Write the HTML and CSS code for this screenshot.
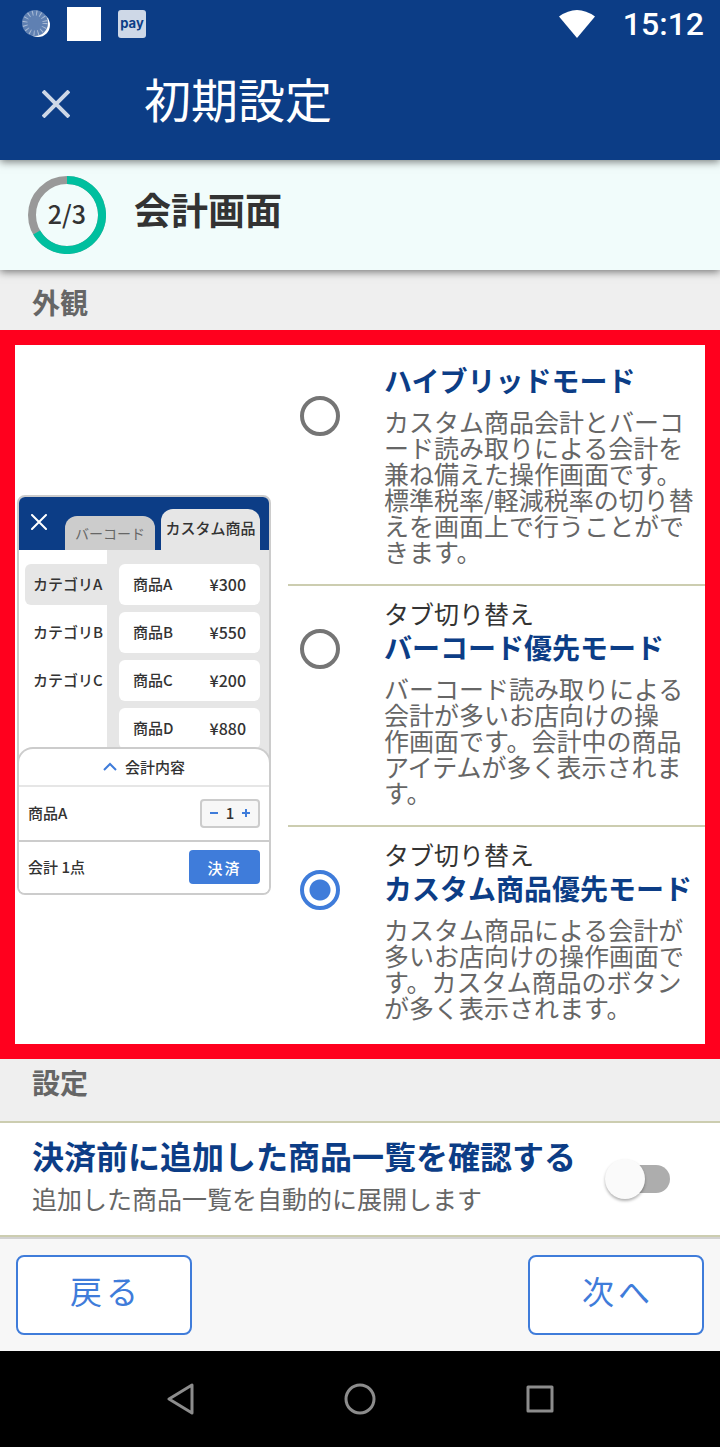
FILE: index.html
```html
<!DOCTYPE html>
<html lang="ja">
<head>
    <meta charset="UTF-8">
    <meta name="viewport" content="width=device-width, initial-scale=1.0">
    <title>初期設定</title>
    <link rel="stylesheet" href="styles.css">
</head>
<body>
    <div class="status-bar">
        <svg class="status-sync" viewBox="0 0 30 30" aria-hidden="true">
            <circle cx="16" cy="16" r="12" fill="#fff"/>
            <circle cx="13" cy="14" r="13" fill="#5f80b2"/>
            <circle cx="13" cy="14" r="10" fill="none" stroke="#a9bbd6" stroke-width="5" stroke-dasharray="1 3"/>
        </svg>
        <span class="status-square"></span>
        <span class="status-pay">pay</span>
        <svg class="status-wifi" viewBox="0 0 36 28" aria-hidden="true">
            <path d="M0 6.500Q18-6.500 36 6.500L18 28Z" fill="#fff"/>
        </svg>
        <span class="status-time">15:12</span>
    </div>

    <header class="app-bar">
        <button type="button" class="close-btn" aria-label="閉じる">
            <svg viewBox="0 0 28 28"><path d="M1 1L27 27M27 1L1 27" stroke="#ced8e7" stroke-width="4"/></svg>
        </button>
        <h1>初期設定</h1>
    </header>

    <div class="step">
        <div class="step-ring">
            <svg viewBox="0 0 78 78" aria-hidden="true">
                <circle cx="39" cy="39" r="35" fill="none" stroke="#999" stroke-width="8"/>
                <path d="M39 4A35 35 0 1 1 8.690 56.500" fill="none" stroke="#00bf9f" stroke-width="8"/>
            </svg>
            <span>2/3</span>
        </div>
        <h2>会計画面</h2>
    </div>

    <main>
        <h3 class="section-title">外観</h3>

        <div class="appearance">
            <!-- 選択中モードのプレビュー -->
            <div class="preview">
                <div class="preview-head">
                    <button type="button" class="preview-close" aria-label="閉じる">
                        <svg viewBox="0 0 16 16"><path d="M1 1L15 15M15 1L1 15" stroke="#fff" stroke-width="2" stroke-linecap="round"/></svg>
                    </button>
                    <button type="button" class="preview-tab">バーコード</button>
                    <button type="button" class="preview-tab active">カスタム商品</button>
                </div>
                <div class="preview-body">
                    <ul class="categories">
                        <li class="active">カテゴリA</li>
                        <li>カテゴリB</li>
                        <li>カテゴリC</li>
                    </ul>
                    <ul class="items">
                        <li><span>商品A</span><span class="price">¥300</span></li>
                        <li><span>商品B</span><span class="price">¥550</span></li>
                        <li><span>商品C</span><span class="price">¥200</span></li>
                        <li><span>商品D</span><span class="price">¥880</span></li>
                    </ul>
                </div>
                <div class="sheet">
                    <div class="sheet-head">
                        <svg viewBox="0 0 14 9" aria-hidden="true"><path d="M1 8L7 2L13 8" fill="none" stroke="#3f7cda" stroke-width="2"/></svg>
                        会計内容
                    </div>
                    <div class="sheet-row">
                        <span>商品A</span>
                        <div class="stepper">
                            <button type="button" aria-label="減らす"><svg viewBox="0 0 10 10"><path d="M1 5H9" stroke="#3f7cda" stroke-width="2"/></svg></button>
                            <span>1</span>
                            <button type="button" aria-label="増やす"><svg viewBox="0 0 10 10"><path d="M1 5H9M5 1V9" stroke="#3f7cda" stroke-width="2"/></svg></button>
                        </div>
                    </div>
                    <div class="sheet-row total">
                        <span>会計 1点</span>
                        <button type="button" class="pay-btn">決済</button>
                    </div>
                </div>
            </div>

            <div class="modes">
                <label class="mode" for="hybrid">
                    <input type="radio" name="mode" id="hybrid">
                    <span class="mode-text">
                        <span class="mode-name">ハイブリッドモード</span>
                        <span class="mode-desc">カスタム商品会計とバーコード読み取りによる会計を兼ね備えた操作画面です。標準税率/軽減税率の切り替えを画面上で行うことができます。</span>
                    </span>
                </label>
                <label class="mode" for="barcode">
                    <input type="radio" name="mode" id="barcode">
                    <span class="mode-text">
                        <span class="mode-kind">タブ切り替え</span>
                        <span class="mode-name">バーコード優先モード</span>
                        <span class="mode-desc">バーコード読み取りによる会計が多いお店向けの操<br>作画面です。会計中の商品アイテムが多く表示されます。</span>
                    </span>
                </label>
                <label class="mode" for="custom">
                    <input type="radio" name="mode" id="custom" checked>
                    <span class="mode-text">
                        <span class="mode-kind">タブ切り替え</span>
                        <span class="mode-name">カスタム商品優先モード</span>
                        <span class="mode-desc">カスタム商品による会計が多いお店向けの操作画面です。カスタム商品のボタンが多く表示されます。</span>
                    </span>
                </label>
            </div>
        </div>

        <h3 class="section-title">設定</h3>

        <label class="setting" for="confirm">
            <span class="setting-text">
                <span class="setting-name">決済前に追加した商品一覧を確認する</span>
                <span class="setting-desc">追加した商品一覧を自動的に展開します</span>
            </span>
            <input type="checkbox" class="switch" id="confirm">
        </label>
    </main>

    <footer class="actions">
        <button type="button" class="action-btn">戻る</button>
        <button type="button" class="action-btn">次へ</button>
    </footer>

    <nav class="nav-bar">
        <button type="button" aria-label="戻る">
            <svg viewBox="0 0 32 32"><path d="M28 2V30L5 16Z"/></svg>
        </button>
        <button type="button" aria-label="ホーム">
            <svg viewBox="0 0 32 32"><circle cx="16" cy="16" r="14"/></svg>
        </button>
        <button type="button" aria-label="履歴">
            <svg viewBox="0 0 32 32"><rect x="4" y="4" width="24" height="24"/></svg>
        </button>
    </nav>
</body>
</html>
```

FILE: styles.css
```css
* {
    box-sizing: border-box;
}

body {
    margin: 0;
    font-family: "Noto Sans CJK JP", sans-serif;
    background-color: #efefef;
    color: #333;
}

h1, h2, h3, ul {
    margin: 0;
    padding: 0;
}

ul {
    list-style: none;
}

button {
    font-family: inherit;
    padding: 0;
    border: none;
    background: none;
    cursor: pointer;
}

svg {
    display: block;
}

/* status bar */
.status-bar {
    position: relative;
    display: flex;
    align-items: center;
    height: 48px;
    padding: 0 16px 0 22px;
    background-color: #0c3d86;
    color: #fff;
    z-index: 3;
}

.status-sync {
    width: 30px;
    height: 30px;
}

.status-square {
    width: 34px;
    height: 34px;
    margin: 0 17px 0 15px;
    background-color: #fff;
}

.status-pay {
    width: 28px;
    height: 28px;
    border-radius: 3px;
    background-color: #ced8e7;
    color: #0c3d86;
    font: bold 13px/26px Inter, sans-serif;
    text-align: center;
}

.status-wifi {
    width: 36px;
    height: 28px;
    margin: 0 28px 0 auto;
}

.status-time {
    font: 500 32px/50px Roboto, sans-serif;
}

/* app bar */
.app-bar {
    position: relative;
    display: flex;
    align-items: center;
    height: 112px;
    padding-left: 42px;
    background-color: #0c3d86;
    color: #fff;
    box-shadow: 0 2px 8px rgba(0, 0, 0, 0.5);
    z-index: 2;
}

.close-btn {
    width: 28px;
    height: 28px;
}

.app-bar h1 {
    margin-left: 74px;
    padding-bottom: 12px;
    font-size: 47px;
    line-height: 60px;
    font-weight: 400;
}

/* step */
.step {
    position: relative;
    display: flex;
    align-items: center;
    height: 110px;
    padding-left: 28px;
    background-color: #f1fcfb;
    box-shadow: 0 2px 8px rgba(0, 0, 0, 0.5);
    z-index: 1;
}

.step-ring {
    display: grid;
    place-items: center;
    width: 78px;
    height: 78px;
    font-size: 25px;
    line-height: 30px;
    font-weight: 500;
}

.step-ring svg,
.step-ring span {
    grid-area: 1 / 1;
}

.step-ring span {
    padding-bottom: 4px;
}

.step h2 {
    margin-left: 28px;
    padding-bottom: 12px;
    font-size: 37px;
    line-height: 48px;
    font-weight: 700;
}

.section-title {
    height: 60px;
    padding: 14px 32px 0;
    font-size: 28px;
    line-height: 36px;
    font-weight: 700;
    color: #666;
}

/* appearance */
.appearance {
    display: grid;
    grid-template-columns: 273px 1fr;
    align-items: center;
    border: 15px solid #ff001e;
    background-color: #fff;
}

.appearance + .section-title {
    height: 62px;
    padding-top: 5px;
}

/* preview */
.preview {
    width: 254px;
    margin-left: 2px;
    border: 2px solid #ccc;
    border-radius: 8px;
    overflow: hidden;
    font-size: 15px;
    line-height: 20px;
    font-weight: 500;
}

.preview button {
    color: inherit;
    font-size: 15px;
    font-weight: 500;
}

.preview-head {
    display: flex;
    align-items: flex-end;
    height: 53px;
    padding: 0 9px 0 12px;
    background-color: #0c3d86;
}

.preview-close {
    width: 16px;
    height: 16px;
    margin: 0 auto 20px 0;
}

.preview .preview-tab {
    width: 90px;
    height: 34px;
    margin-right: 6px;
    border-radius: 12px 12px 0 0;
    background-color: #ccc;
    color: #666;
    font-size: 14px;
    font-weight: 400;
}

.preview .preview-tab.active {
    width: 99px;
    height: 41px;
    margin-right: 0;
    padding-bottom: 4px;
    background-color: #e6e6e6;
    color: #333;
    font-size: 15px;
    font-weight: 500;
}

.preview-body {
    display: flex;
    height: 212px;
    background-color: #e6e6e6;
}

.categories {
    width: 88px;
    padding: 14px 0 0 6px;
    background-color: #fff;
}

.categories li {
    height: 41px;
    margin-bottom: 7px;
    padding: 10px 0 0 8px;
    border-radius: 6px 0 0 6px;
    white-space: nowrap;
}

.categories .active {
    background-color: #e6e6e6;
}

.items {
    flex: 1;
    padding: 14px 9px 0 12px;
}

.items li {
    display: flex;
    justify-content: space-between;
    height: 41px;
    margin-bottom: 7px;
    padding: 10px 14px 0;
    border-radius: 6px;
    background-color: #fff;
}

.items .price {
    font-size: 16px;
}

.sheet {
    position: relative;
    margin: -15px -2px 0;
    border: 2px solid #ccc;
    border-bottom: none;
    border-radius: 16px 16px 0 0;
    background-color: #fff;
}

.sheet-head {
    display: flex;
    justify-content: center;
    align-items: center;
    gap: 8px;
    height: 38px;
    border-bottom: 2px solid #e6e6e6;
}

.sheet-head svg {
    width: 14px;
    height: 9px;
}

.sheet-row {
    display: flex;
    justify-content: space-between;
    align-items: center;
    height: 53px;
    padding: 0 9px;
}

.sheet-row.total {
    border-top: 2px solid #ccc;
}

.stepper {
    display: flex;
    justify-content: space-between;
    align-items: center;
    width: 60px;
    height: 29px;
    padding: 0 7px;
    border: 2px solid #ccc;
    border-radius: 4px;
    background-color: #f7f7f7;
}

.stepper svg {
    width: 10px;
    height: 10px;
}

.preview .pay-btn {
    width: 71px;
    height: 34px;
    border-radius: 4px;
    background-color: #3f7cda;
    color: #fff;
    letter-spacing: 2px;
}

/* modes */
.modes {
    padding: 8px 0 4px;
}

.mode {
    display: flex;
    align-items: flex-start;
    padding: 10px 10px 20px 12px;
}

.mode + .mode {
    border-top: 2px solid #cccdb0;
}

.mode input {
    flex: none;
    appearance: none;
    width: 40px;
    height: 40px;
    margin: 33px 44px 0 0;
    border: 4px solid #757575;
    border-radius: 50%;
}

.mode input:checked {
    border-color: #3f7cda;
    background: radial-gradient(circle, #3f7cda 10px, transparent 11px);
}

.mode-text span {
    display: block;
}

.mode-kind {
    font-size: 25px;
    line-height: 34px;
}

.mode-name {
    margin-bottom: 11px;
    font-size: 28px;
    line-height: 34px;
    font-weight: 700;
    color: #0c3d86;
}

.mode-desc {
    font-size: 25px;
    line-height: 26px;
    color: #666;
    line-break: anywhere;
}

/* setting */
.setting {
    display: flex;
    justify-content: space-between;
    align-items: center;
    height: 116px;
    padding: 0 50px 0 32px;
    border-top: 2px solid #cccdb0;
    border-bottom: 2px solid #cccdb0;
    background-color: #fff;
}

.setting-text {
    padding-bottom: 12px;
}

.setting-text span {
    display: block;
}

.setting-name {
    font-size: 32px;
    line-height: 50px;
    font-weight: 700;
    color: #0c3d86;
}

.setting-desc {
    font-size: 25px;
    line-height: 36px;
    color: #666;
}

.switch {
    flex: none;
    display: flex;
    align-items: center;
    appearance: none;
    width: 60px;
    height: 28px;
    margin: 0;
    border-radius: 14px;
    background-color: #adadad;
}

.switch::before {
    content: "";
    width: 40px;
    height: 40px;
    margin-left: -5px;
    border-radius: 50%;
    background-color: #fafafa;
    box-shadow: 0 2px 3px rgba(0, 0, 0, 0.3);
}

.switch:checked {
    background-color: #3f7cda;
}

.switch:checked::before {
    margin-left: 25px;
}

/* footer */
.actions {
    display: flex;
    justify-content: space-between;
    padding: 16px;
    border-top: 2px solid #d2d2d2;
    background-color: #f7f7f7;
}

.action-btn {
    width: 176px;
    height: 80px;
    padding: 0 0 10px 4px;
    border: 2px solid #3f7cda;
    border-radius: 8px;
    background-color: #fff;
    color: #3f7cda;
    font-size: 32px;
    letter-spacing: 4px;
}

.nav-bar {
    display: grid;
    grid-template-columns: repeat(3, 1fr);
    justify-items: center;
    align-items: center;
    height: 96px;
    padding: 0 90px;
    background-color: #000;
}

.nav-bar svg {
    width: 32px;
    height: 32px;
    fill: none;
    stroke: #8c8c8c;
    stroke-width: 3;
    stroke-linejoin: round;
}
```
